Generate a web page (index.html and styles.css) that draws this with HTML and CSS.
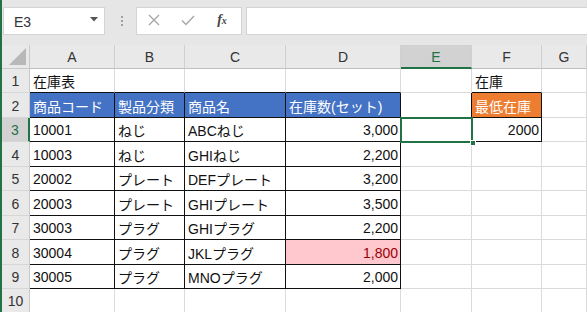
FILE: index.html
```html
<!DOCTYPE html>
<html lang="ja">
<head>
<meta charset="utf-8">
<link rel="stylesheet" href="styles.css">
</head>
<body>
<div class="app">
  <div class="toolbar">
    <div class="namebox">
      <span class="ref">E3</span>
      <svg class="dd" width="8" height="5" viewBox="0 0 8 5"><path d="M0 0H8L4 4.5z" fill="#555"/></svg>
    </div>
    <div class="grip"><i></i><i></i><i></i></div>
    <div class="fbtns">
      <span class="fb"><svg width="12" height="12" viewBox="0 0 12 12"><path d="M1 1L11 11M11 1L1 11" stroke="#a8a8a8" stroke-width="1.4" fill="none"/></svg></span>
      <span class="fb"><svg width="14" height="11" viewBox="0 0 14 11"><path d="M1 5.5L5 9.5L13 1" stroke="#a8a8a8" stroke-width="1.5" fill="none"/></svg></span>
      <span class="fb fx"><i>f</i><sub>x</sub></span>
    </div>
    <div class="finput"></div>
  </div>
  <div class="sheet">
    <div class="corner"><svg width="18" height="17" viewBox="0 0 18 17"><path d="M17 0V17H0z" fill="#b8b8b8"/></svg></div>
    <div class="ch">A</div><div class="ch">B</div><div class="ch">C</div><div class="ch">D</div><div class="ch sel-h">E</div><div class="ch">F</div><div class="ch">G</div>

    <div class="rh">1</div>
    <div class="c bt">在庫表</div><div class="c bt"></div><div class="c bt"></div><div class="c bt"></div><div class="c"></div><div class="c bt">在庫</div><div class="c"></div>

    <div class="rh">2</div>
    <div class="c b blue">商品コード</div><div class="c b blue">製品分類</div><div class="c b blue">商品名</div><div class="c b blue">在庫数(セット)</div><div class="c br"></div><div class="c b orange">最低在庫</div><div class="c"></div>

    <div class="rh sel-r">3</div>
    <div class="c b">10001</div><div class="c b">ねじ</div><div class="c b">ABCねじ</div><div class="c b num">3,000</div><div class="c br active"><span class="selbox"><span class="handle"></span></span></div><div class="c b num">2000</div><div class="c"></div>

    <div class="rh">4</div>
    <div class="c b">10003</div><div class="c b">ねじ</div><div class="c b">GHIねじ</div><div class="c b num">2,200</div><div class="c"></div><div class="c"></div><div class="c"></div>

    <div class="rh">5</div>
    <div class="c b">20002</div><div class="c b">プレート</div><div class="c b">DEFプレート</div><div class="c b num">3,200</div><div class="c"></div><div class="c"></div><div class="c"></div>

    <div class="rh">6</div>
    <div class="c b">20003</div><div class="c b">プレート</div><div class="c b">GHIプレート</div><div class="c b num">3,500</div><div class="c"></div><div class="c"></div><div class="c"></div>

    <div class="rh">7</div>
    <div class="c b">30003</div><div class="c b">プラグ</div><div class="c b">GHIプラグ</div><div class="c b num">2,200</div><div class="c"></div><div class="c"></div><div class="c"></div>

    <div class="rh">8</div>
    <div class="c b">30004</div><div class="c b">プラグ</div><div class="c b">JKLプラグ</div><div class="c b num pink">1,800</div><div class="c"></div><div class="c"></div><div class="c"></div>

    <div class="rh">9</div>
    <div class="c b">30005</div><div class="c b">プラグ</div><div class="c b">MNOプラグ</div><div class="c b num">2,000</div><div class="c"></div><div class="c"></div><div class="c"></div>

    <div class="rh">10</div>
    <div class="c"></div><div class="c"></div><div class="c"></div><div class="c"></div><div class="c"></div><div class="c"></div><div class="c"></div>
  </div>
</div>
</body>
</html>
```

FILE: styles.css
```css
* { box-sizing: border-box; }
html, body { margin: 0; padding: 0; }
body {
  width: 587px;
  height: 312px;
  overflow: hidden;
  background: #fff;
  font-family: "Liberation Sans", "Noto Sans CJK JP", sans-serif;
  font-size: 14px;
  color: #1a1a1a;
}
.app {
  height: 312px;
  border-left: 2px solid #217346;
  display: flex;
  flex-direction: column;
  overflow: hidden;
}
.toolbar {
  height: 45px;
  flex: none;
  background: #e6e6e6;
  display: flex;
  align-items: flex-start;
  padding: 7px 0 0 1px;
}
.namebox {
  width: 102px;
  height: 28px;
  background: #fff;
  border: 1px solid #d4d4d4;
  display: flex;
  align-items: center;
  justify-content: space-between;
  padding: 2px 6px 0 10px;
  color: #333;
  font-size: 14px;
}
.namebox .dd { margin-top: -6px; }
.grip {
  width: 31px;
  height: 28px;
  display: flex;
  flex-direction: column;
  align-items: center;
  justify-content: center;
  gap: 2px;
  padding-left: 3px;
}
.grip i {
  display: block;
  width: 2px;
  height: 2px;
  background: #a0a0a0;
}
.fbtns {
  width: 106px;
  height: 28px;
  background: #fff;
  border: 1px solid #d4d4d4;
  display: grid;
  grid-template-columns: 34px 34px 34px;
  align-items: center;
  margin-right: 4px;
}
.fb {
  display: flex;
  justify-content: center;
  align-items: center;
  margin-top: -2px;
}
.fx {
  font-family: "Liberation Serif", serif;
  font-size: 14px;
  color: #444;
  font-weight: bold;
}
.fx i { font-style: italic; }
.fx sub { font-size: 10px; font-style: italic; vertical-align: -1px; margin-left: 0; }
.finput {
  flex: 1;
  height: 28px;
  background: #fff;
  border: 1px solid #d4d4d4;
  border-right: 0;
}
.sheet {
  flex: 1;
  display: grid;
  grid-template-columns: 28px 85px 70px 101px 115px 71px 70px 1fr;
  grid-template-rows: 24px 24px 25px 24px 25px 24px 25px 24px 25px 24px 24px;
}
.corner {
  background: #e9e9e9;
  border-right: 1px solid #c8c8c8;
  border-bottom: 1px solid #c8c8c8;
  display: flex;
  align-items: flex-end;
  justify-content: flex-end;
  padding: 0 2px 3px 0;
}
.ch {
  background: #e9e9e9;
  border-right: 1px solid #d0d0d0;
  border-bottom: 1px solid #c0c0c0;
  display: flex;
  align-items: center;
  justify-content: center;
  color: #333;
  font-size: 14px;
  padding-top: 1px;
}
.ch.sel-h {
  background: #d2d2d2;
  border-bottom: 2px solid #217346;
  color: #217346;
}
.rh {
  background: #e9e9e9;
  border-right: 1px solid #c8c8c8;
  border-bottom: 1px solid #d6d6d6;
  display: flex;
  align-items: center;
  justify-content: center;
  color: #333;
  font-size: 14px;
  padding-top: 1px;
}
.rh.sel-r {
  background: #d2d2d2;
  border-right: 2px solid #217346;
  color: #217346;
}
.c {
  border-right: 1px solid #dadada;
  border-bottom: 1px solid #dadada;
  display: flex;
  align-items: center;
  padding: 1px 3px 0 3px;
  white-space: nowrap;
  overflow: visible;
  color: #111;
}
.c.b { border-right-color: #111; border-bottom-color: #111; }
.c.bt { border-bottom-color: #111; }
.c.br { border-right-color: #111; }
.c.num { justify-content: flex-end; padding-right: 2px; }
.c.blue { background: #4472c4; color: #fff; }
.c.orange { background: #ed7d31; color: #fff; }
.c.pink { background: #ffc7ce; color: #9c0006; }
.c.active { position: relative; }
.selbox {
  position: absolute;
  left: -1px;
  top: -1px;
  width: 73px;
  height: 26px;
  border: 2px solid #217346;
}
.handle {
  position: absolute;
  right: -5px;
  bottom: -5px;
  width: 6px;
  height: 6px;
  background: #217346;
  border: 1px solid #fff;
}
```
